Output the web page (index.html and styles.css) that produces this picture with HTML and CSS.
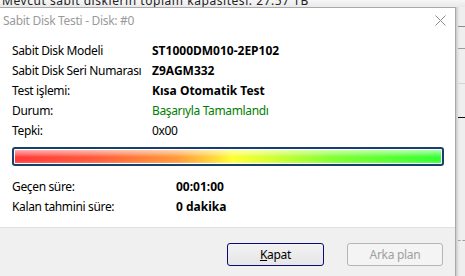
FILE: index.html
```html
<!DOCTYPE html>
<html lang="tr">
<head>
<meta charset="utf-8">
<link rel="stylesheet" href="styles.css">
</head>
<body>
<div class="screen">
  <div class="under-top"><span class="under-text">Mevcut sabit disklerin toplam kapasitesi: 27.57 TB</span></div>
  <div class="main-row">
    <div class="dialog">
      <div class="titlebar">
        <span class="title">Sabit Disk Testi - Disk: #0</span>
        <svg class="close" width="11" height="11" viewBox="0 0 11 11"><path d="M0.5 0.5 L10.5 10.5 M10.5 0.5 L0.5 10.5" stroke="#8a8a8a" stroke-width="1" fill="none"/></svg>
      </div>
      <div class="content">
        <div class="info">
          <div class="label">Sabit Disk Modeli</div><div class="value bold">ST1000DM010-2EP102</div>
          <div class="label">Sabit Disk Seri Numarası</div><div class="value bold">Z9AGM332</div>
          <div class="label">Test işlemi:</div><div class="value bold">Kısa Otomatik Test</div>
          <div class="label">Durum:</div><div class="value green">Başarıyla Tamamlandı</div>
          <div class="label">Tepki:</div><div class="value">0x00</div>
        </div>
        <div class="bar"><div class="bar-fill"></div></div>
        <div class="times">
          <div class="label">Geçen süre:</div><div class="value bold">00:01:00</div>
          <div class="label">Kalan tahmini süre:</div><div class="value bold">0 dakika</div>
        </div>
      </div>
      <div class="footer">
        <button class="btn default"><u>K</u>apat</button>
        <button class="btn disabled" disabled>Arka plan</button>
      </div>
    </div>
    <div class="under-side">
      <div class="line l1"></div>
      <div class="line l2"></div>
      <div class="line l3"></div>
      <div class="line l4"></div>
      <div class="line l5"></div>
    </div>
  </div>
</div>
</body>
</html>
```
FILE: styles.css
```css
* { box-sizing: border-box; }
html, body { margin: 0; padding: 0; }
body {
  width: 465px;
  height: 276px;
  overflow: hidden;
  font-family: "Noto Sans", "Open Sans", sans-serif;
  font-size: 12px;
  color: #000;
  background: #f0f0f0;
}
.screen {
  display: flex;
  flex-direction: column;
  height: 276px;
}
.under-top {
  height: 7px;
  overflow: hidden;
  background: linear-gradient(#f6f6f6, #e9e9e9);
  padding-left: 2px;
}
.under-text {
  display: block;
  line-height: 14px;
  margin-top: -6px;
  font-size: 12px;
  letter-spacing: 0.55px;
  white-space: nowrap;
  color: #222;
}
.main-row {
  display: flex;
  flex: 1;
}
.dialog {
  width: 456px;
  background: #fff;
  border-top: 1px solid #a9a9a9;
  border-right: 1px solid #a9a9a9;
  display: flex;
  flex-direction: column;
}
.titlebar {
  height: 24px;
  display: flex;
  align-items: center;
  justify-content: space-between;
  padding: 0 9px 0 3px;
}
.title {
  color: #9a9a9a;
  font-size: 12px;
  letter-spacing: -0.3px;
}
.close { display: block; }
.content {
  padding: 9px 11px 10px 12px;
  border-bottom: 1px solid #dfdfdf;
}
.info {
  display: grid;
  grid-template-columns: 140px 1fr;
  grid-auto-rows: 20px;
  align-items: center;
}
.times {
  display: grid;
  grid-template-columns: 164px 1fr;
  grid-auto-rows: 20px;
  align-items: center;
  margin-top: 11px;
}
.label, .value { white-space: nowrap; line-height: 20px; letter-spacing: -0.35px; }
.bold { font-weight: 700; letter-spacing: 0; }
.green { color: #008000; }
.bar {
  margin-top: 6px;
  height: 19px;
  border: 2px solid #17406c;
  border-radius: 3px;
  padding: 1px;
  background: #fff;
}
.bar-fill {
  height: 100%;
  background:
    linear-gradient(rgba(255,255,255,0.6) 0%, rgba(255,255,255,0.3) 30%, rgba(255,255,255,0) 55%, rgba(255,255,255,0) 80%, rgba(255,255,255,0.15) 100%),
    linear-gradient(90deg, #ff3a3a 0%, #ff5a3c 18%, #ff9a3a 38%, #ffd23a 46%, #ffff33 51%, #d4ff33 60%, #80ff33 75%, #33ff33 100%);
}
.footer {
  flex: 1;
  background: #f0f0f0;
  display: flex;
  justify-content: flex-end;
  align-items: flex-start;
  gap: 23px;
  padding: 15px 12px 0 0;
}
.btn {
  width: 97px;
  height: 23px;
  font-family: inherit;
  font-size: 12px;
  letter-spacing: -0.3px;
  border-radius: 3px;
  padding: 0;
}
.default {
  border: 1px solid #0a0a78;
  background: linear-gradient(#f2f2f2, #e6e6e6);
  color: #000;
}
.disabled {
  border: 1px solid #b5b5b5;
  background: #f4f4f4;
  color: #a0a0a0;
  width: 96px;
}
.under-side {
  flex: 1;
  position: relative;
  background: linear-gradient(90deg, #c8c8c8 0px, #e2e2e2 2px, #efefef 4px);
}
.line {
  position: absolute;
  left: 2px;
  right: 0;
  height: 1px;
}
.l1 { top: 19px; background: #8c8c8c; }
.l2 { top: 41px; background: #9c9c9c; }
.l3 { top: 76px; background: #d4d4d4; }
.l4 { top: 110px; background: #111; }
.l5 { top: 233px; border-top: 1px dashed #a0a0a0; height: 0; }
```
